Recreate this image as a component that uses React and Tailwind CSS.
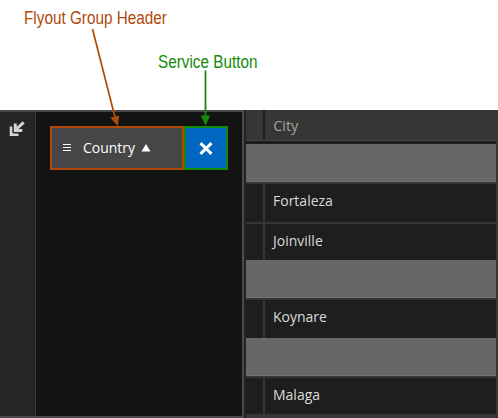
function Label({ className, children }) {
  return (
    <span className={`block origin-left whitespace-nowrap font-['Liberation_Sans',sans-serif] text-[18px] leading-5 ${className}`}>
      {children}
    </span>
  );
}

function GroupRow() {
  return (
    <div className="h-10 shrink-0 border-b-2 border-[#363636] bg-[#676767]">
      <div className="h-full border-b border-[#727272]" />
    </div>
  );
}

function CityRow({ city, className }) {
  return (
    <div className={`flex shrink-0 bg-[#1e1e1e] ${className}`}>
      <div className="w-[19px] shrink-0 border-r-2 border-[#363636]" />
      <div className="pl-2 pt-[7px]">
        <span className="block origin-left whitespace-nowrap text-[14px] leading-5 text-[#dadada]">{city}</span>
      </div>
    </div>
  );
}

function CityTable() {
  return (
    <div className="flex min-w-0 grow flex-col border-l-2 border-[#242424] bg-[#363636] pr-0.5">
      <div className="flex h-[31px] shrink-0 border-b border-[#474747] bg-[#363636]">
        <div className="w-[19px] border-r-2 border-[#1e1e1e]" />
        <span className="block origin-left scale-x-[1.03] pl-2 pt-[6px] text-[14px] leading-5 text-[#a2a2a2]">City</span>
      </div>
      <div className="h-[3px] shrink-0 bg-[#1c1c1c]" />
      <GroupRow />
      <CityRow city="Fortaleza" className="h-10 border-b-2 border-[#363636]" />
      <CityRow city="Joinville" className="h-9" />
      <GroupRow />
      <CityRow city="Koynare" className="h-[38px]" />
      <GroupRow />
      <CityRow city="Malaga" className="h-9" />
    </div>
  );
}

export default function App() {
  return (
    <div className="relative flex h-[418px] w-[498px] flex-col overflow-hidden bg-white font-['Open_Sans','Noto_Sans',sans-serif]">
      <header className="h-[110px] shrink-0 pt-2">
        <Label className="ml-6 w-fit scale-x-[0.85] text-[#b04a07]">Flyout Group Header</Label>
        <Label className="ml-[158px] mt-6 w-fit scale-x-[0.85] text-[#158a0b]">Service Button</Label>
      </header>
      <main className="flex h-[308px]">
        <section className="flex w-[244px] shrink-0 border-y-2 border-r-2 border-[#4a4a4a] bg-[#131313]">
          <div className="w-9 shrink-0 border-r border-[#383838] bg-[#252525] pl-[9px] pt-[9px]">
            <svg width="17" height="17" viewBox="0 0 17 17" fill="none" stroke="#d4d4d4">
              <path d="M14.7 1.3 7.5 8" strokeWidth="3" />
              <path d="M6.3 2.5V9.4H13.3" strokeWidth="3" />
              <path d="M2 5.5V13.8H9.5" strokeWidth="2.6" />
              <path d="M1.8 14 3.8 12" strokeWidth="2" />
            </svg>
          </div>
          <div className="pl-3.5 pt-3.5">
            <div className="flex h-11 w-[178px]">
              <div className="flex w-[134px] items-center border-2 border-[#b04a07] bg-[#464646] pl-[11px] text-white">
                <svg className="shrink-0" width="8" height="8" viewBox="0 0 8 8" fill="currentColor">
                  <path d="M0 0h8v1H0zM0 3h8v1H0zM0 6h8v1H0z" />
                </svg>
                <span className="ml-3 block w-[52px] origin-left scale-x-[0.93] whitespace-nowrap pb-[3px] text-[15px] leading-5">Country</span>
                <svg className="ml-1.5 shrink-0" width="10" height="8" viewBox="0 0 10 8" fill="currentColor">
                  <path d="m5 0 4.5 7.5h-9z" />
                </svg>
              </div>
              <button className="flex w-11 items-center justify-center border-2 border-[#158a0b] bg-[#0067c0]">
                <svg width="14" height="13" viewBox="0 0 14 13" fill="none" stroke="white" strokeWidth="3">
                  <path d="M1.5 1.2 12.5 11.8M12.5 1.2 1.5 11.8" />
                </svg>
              </button>
            </div>
          </div>
        </section>
        <CityTable />
      </main>
      <svg className="pointer-events-none absolute left-0 top-0" width="498" height="130" viewBox="0 0 498 130">
        <g fill="#b04a07" stroke="#b04a07">
          <path d="M92.5 29 115.2 118" strokeWidth="1.7" />
          <path d="m117.8 126-7.5-8.3 8.8-2.2z" stroke="none" />
        </g>
        <g fill="#158a0b" stroke="#158a0b">
          <path d="M205.5 70.5V117" strokeWidth="1.8" />
          <path d="M205.5 125.5 200.8 115.5h9.4z" stroke="none" />
        </g>
      </svg>
    </div>
  );
}
